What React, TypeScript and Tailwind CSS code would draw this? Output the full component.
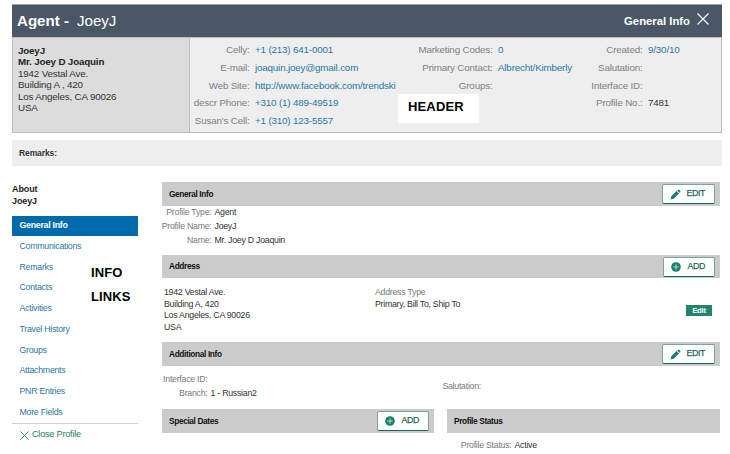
import React from "react";

type Pair = { label: string; value?: string; dark?: boolean };

const phones: Pair[] = [
  { label: "Celly:", value: "+1 (213) 641-0001" },
  { label: "E-mail:", value: "joaquin.joey@gmail.com" },
  { label: "Web Site:", value: "http://www.facebook.com/trendski" },
  { label: "descr Phone:", value: "+310 (1) 489-49519" },
  { label: "Susan's Cell:", value: "+1 (310) 123-5557" },
];
const contacts: Pair[] = [
  { label: "Marketing Codes:", value: "0" },
  { label: "Primary Contact:", value: "Albrecht/Kimberly" },
  { label: "Groups:" },
];
const meta: Pair[] = [
  { label: "Created:", value: "9/30/10" },
  { label: "Salutation:" },
  { label: "Interface ID:" },
  { label: "Profile No.:", value: "7481", dark: true },
];
const links = ["Communications", "Remarks", "Contacts", "Activities", "Travel History", "Groups", "Attachments", "PNR Entries", "More Fields"];

function HeaderColumn({ rows, className }: { rows: Pair[]; className: string }) {
  return (
    <div className={`shrink-0 pt-[4px] ${className}`}>
      {rows.map((r) => (
        <div key={r.label} className="flex h-[17.6px] items-center whitespace-nowrap">
          <span className="flex-1 text-right text-[#808080]">{r.label}</span>
          <span className={`ml-[5.5px] w-0 ${r.dark ? "text-[#333]" : "text-[#2878a8]"}`}>{r.value}</span>
        </div>
      ))}
    </div>
  );
}

function Cross({ className }: { className: string }) {
  return (
    <svg viewBox="0 0 12 12" className={className} fill="none" stroke="currentColor" strokeWidth="1.1">
      <path d="M.5.5l11 11M11.5.5l-11 11" />
    </svg>
  );
}

function ActionButton({ kind }: { kind: "EDIT" | "ADD" }) {
  return (
    <button className={`flex h-[20px] items-center rounded-[2px] border border-b-[1.5px] border-[#79a69c] border-b-[#17685a] bg-white pl-[7px] text-[8.8px] tracking-[-0.4px] text-[#28665a] ${kind === "EDIT" ? "w-[53px]" : "w-[52px]"}`}>
      {kind === "EDIT" ? (
        <svg viewBox="0 0 11 11" className="h-[11px] w-[11px] shrink-0" fill="#16806a">
          <path d="M.5 10.5l.8-3.2 5.3-5.2 2.4 2.4-5.3 5.2zM7.2 1.5l.9-.8q.6-.4 1.2.1l.9.9q.5.6.1 1.2l-.8.9z" />
        </svg>
      ) : (
        <svg viewBox="0 0 10 10" className="h-[10px] w-[10px] shrink-0">
          <circle cx="5" cy="5" r="4.8" fill="#16806a" />
          <path d="M5 2.3v5.4M2.3 5h5.4" stroke="#b5dcd3" strokeWidth="1" />
        </svg>
      )}
      <span className={`[-webkit-text-stroke:0.25px] ${kind === "EDIT" ? "ml-[5.5px]" : "ml-[6.5px]"}`}>{kind}</span>
    </button>
  );
}

function Bar({ title, kind, className = "" }: { title: string; kind?: "EDIT" | "ADD"; className?: string }) {
  return (
    <div className={`flex shrink-0 items-center justify-between bg-[#cbcbcb] pl-[7px] pr-[5px] ${className}`}>
      <h2 className="text-[8.3px] font-bold tracking-[-0.36px] text-[#111]">{title}</h2>
      {kind && <ActionButton kind={kind} />}
    </div>
  );
}

function Field({ label, value, className }: { label: string; value?: string; className: string }) {
  return (
    <div className="flex h-[14px] items-center whitespace-nowrap">
      <span className={`flex shrink-0 justify-end text-[#7a7a7a] ${className}`}>{label}</span>
      <span className="ml-[3px] text-[#333]">{value}</span>
    </div>
  );
}

export default function App() {
  return (
    <div className="relative h-[454px] w-[730px] overflow-hidden bg-white pl-[12px] pt-[4px] font-['Liberation_Sans',Arial,sans-serif] text-[8.8px] tracking-[-0.27px] text-[#333]">
      <header className="w-[710px]">
        <div className="flex h-[33px] items-center border-t border-[#98a1ac] bg-[#4a5767] pl-[5px] pr-[13px] tracking-normal text-white">
          <h1 className="text-[15.1px] font-bold">Agent -</h1>
          <span className="ml-[8px] text-[15.1px]">JoeyJ</span>
          <span className="ml-auto text-[11.3px] font-bold">General Info</span>
          <Cross className="mb-[4px] ml-[7px] h-[12px] w-[12px]" />
        </div>
        <div className="flex h-[96px] border border-b-[1.5px] border-[#bdbdbd] bg-[#eee] text-[9.8px] tracking-[-0.17px]">
          <div className="w-[177px] shrink-0 border-r border-[#bdbdbd] bg-[#dcdcdc] pl-[5px] pt-[6.5px] leading-[11.6px]">
            <p className="font-bold text-[#252525]">JoeyJ</p>
            <p className="font-bold text-[#252525]">Mr. Joey D Joaquin</p>
            <p>1942 Vestal Ave.</p>
            <p>Building A , 420</p>
            <p>Los Angeles, CA 90026</p>
            <p>USA</p>
          </div>
          <HeaderColumn rows={phones} className="w-[65px]" />
          <HeaderColumn rows={contacts} className="w-[243px]" />
          <HeaderColumn rows={meta} className="w-[150px]" />
        </div>
      </header>
      <div className="mt-[7px] flex h-[26px] w-[710px] items-center bg-[#eee] pl-[7px] text-[8.5px] font-bold tracking-[-0.1px]">Remarks:</div>

      <div className="mt-[16px] flex">
        <aside className="w-[126px] shrink-0">
          <div className="pb-[9px] pt-[2px] text-[9px] font-bold leading-[11.5px] tracking-[-0.1px] text-[#222]">
            <p>About</p>
            <p>JoeyJ</p>
          </div>
          <nav>
            <div className="flex h-[19.5px] items-center bg-[#006bac] pl-[7.5px] font-bold text-white">General Info</div>
            <div className="pt-[0.7px]">
              {links.map((l) => (
                <a key={l} className="flex h-[20.75px] items-center pl-[7.5px] text-[#2878a8]">{l}</a>
              ))}
            </div>
          </nav>
          <div className="flex h-[23px] items-center border-t border-[#d2d2d2] pl-[7.5px] text-[#258069]">
            <Cross className="mt-[1px] h-[9px] w-[9px]" />
            <span className="ml-[3.5px] text-[9px] tracking-[-0.16px]">Close Profile</span>
          </div>
        </aside>

        <main className="ml-[24px] w-[558px]">
          <Bar title="General Info" kind="EDIT" className="h-[24px]" />
          <div className="h-[49px]">
            <Field label="Profile Type:" value="Agent" className="w-[49.5px]" />
            <Field label="Profile Name:" value="JoeyJ" className="w-[49.5px]" />
            <Field label="Name:" value="Mr. Joey D Joaquin" className="w-[49.5px]" />
          </div>
          <Bar title="Address" kind="ADD" className="h-[23px]" />
          <div className="flex h-[64px] pt-[9.3px] leading-[11.4px]">
            <div className="w-[213px] pl-[2px]">
              <p>1942 Vestal Ave.</p>
              <p>Building A, 420</p>
              <p>Los Angeles, CA 90026</p>
              <p>USA</p>
            </div>
            <div>
              <p className="text-[#7a7a7a]">Address Type</p>
              <p>Primary, Bill To, Ship To</p>
            </div>
            <button className="ml-auto mr-[8px] mt-[17.7px] h-[11px] w-[26px] bg-[#218471] text-[7.8px] font-bold leading-[11px] text-white">Edit</button>
          </div>
          <Bar title="Additional Info" kind="EDIT" className="h-[24px]" />
          <div className="flex h-[43px] pt-[7px]">
            <div className="w-[280px]">
              <Field label="Interface ID:" className="w-[45.5px]" />
              <Field label="Branch:" value="1 - Russian2" className="w-[45.5px]" />
            </div>
            <div className="pt-[7px]">
              <Field label="Salutation:" className="w-[39px]" />
            </div>
          </div>
          <div className="flex gap-[13px]">
            <Bar title="Special Dates" kind="ADD" className="h-[24px] w-[272px]" />
            <div className="w-[273px]">
              <Bar title="Profile Status" className="h-[24px]" />
              <div className="pt-[5.5px]">
                <Field label="Profile Status:" value="Active" className="w-[64.5px]" />
              </div>
            </div>
          </div>
        </main>
      </div>

      <div className="absolute left-[398px] top-[94px] flex h-[29px] w-[81px] items-center bg-white pb-[4px] pl-[10px] text-[13px] font-bold tracking-[0.15px] text-black">HEADER</div>
      <div className="absolute left-[91px] top-[260.5px] text-[13px] font-bold leading-[24.3px] tracking-[0.1px] text-black">
        <p>INFO</p>
        <p>LINKS</p>
      </div>
    </div>
  );
}
